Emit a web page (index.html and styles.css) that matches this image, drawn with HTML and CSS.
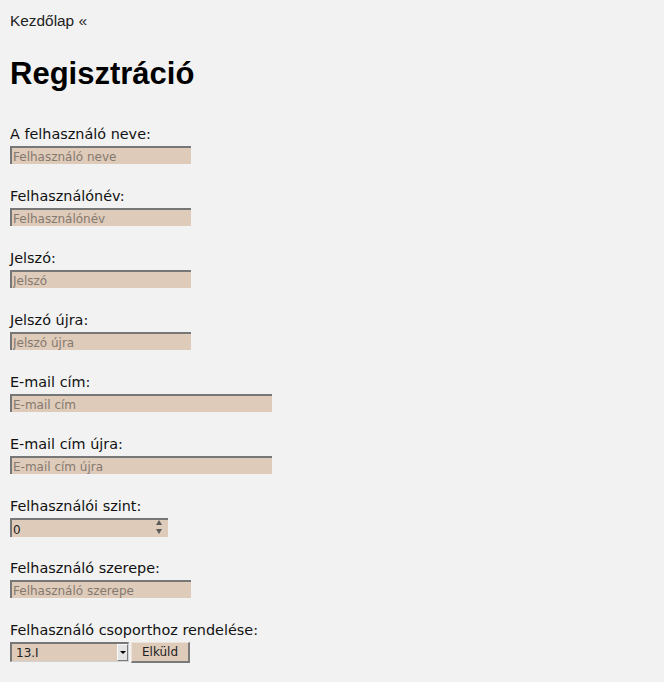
FILE: index.html
```html
<!DOCTYPE html>
<html lang="hu">
<head>
<meta charset="utf-8">
<title>Regisztráció</title>
<link rel="stylesheet" href="styles.css">
</head>
<body>
<div class="page">
  <nav class="crumb"><a class="crumb-link" href="#">Kezdőlap</a> «</nav>
  <h1 class="title">Regisztráció</h1>
  <form class="form">
    <div class="field">
      <label class="label" for="nev">A felhasználó neve:</label>
      <input class="input w-short" id="nev" type="text" placeholder="Felhasználó neve">
    </div>
    <div class="field">
      <label class="label" for="fnev">Felhasználónév:</label>
      <input class="input w-short" id="fnev" type="text" placeholder="Felhasználónév">
    </div>
    <div class="field">
      <label class="label" for="jelszo">Jelszó:</label>
      <input class="input w-short" id="jelszo" type="password" placeholder="Jelszó">
    </div>
    <div class="field">
      <label class="label" for="jelszo2">Jelszó újra:</label>
      <input class="input w-short" id="jelszo2" type="password" placeholder="Jelszó újra">
    </div>
    <div class="field">
      <label class="label" for="email">E-mail cím:</label>
      <input class="input w-long" id="email" type="text" placeholder="E-mail cím">
    </div>
    <div class="field">
      <label class="label" for="email2">E-mail cím újra:</label>
      <input class="input w-long" id="email2" type="text" placeholder="E-mail cím újra">
    </div>
    <div class="field">
      <label class="label" for="szint">Felhasználói szint:</label>
      <div class="number-wrap">
        <input class="input number" id="szint" type="number" value="0">
        <span class="spin" aria-hidden="true"><span class="tri-up"></span><span class="tri-down"></span></span>
      </div>
    </div>
    <div class="field">
      <label class="label" for="szerep">Felhasználó szerepe:</label>
      <input class="input w-short" id="szerep" type="text" placeholder="Felhasználó szerepe">
    </div>
    <div class="field">
      <label class="label" for="csoport">Felhasználó csoporthoz rendelése:</label>
      <div class="row">
        <div class="select-wrap">
          <select class="select" id="csoport">
            <option>13.I</option>
          </select>
          <span class="select-btn" aria-hidden="true"><span class="tri-down dark"></span></span>
        </div>
        <button class="button" type="button">Elküld</button>
      </div>
    </div>
  </form>
</div>
</body>
</html>
```

FILE: styles.css
```css
html, body {
  margin: 0;
  padding: 0;
  background: #f2f2f2;
}

.page {
  padding: 12px 10px 20px 10px;
  font-family: "DejaVu Sans", sans-serif;
  color: #111;
}

.crumb {
  font-family: "Liberation Sans", Arial, sans-serif;
  font-size: 15.4px;
  line-height: 17px;
  color: #222;
}

.crumb-link {
  color: #222;
  text-decoration: none;
}

.title {
  font-family: "Liberation Sans", Arial, sans-serif;
  font-weight: bold;
  font-size: 31px;
  line-height: 36px;
  margin: 27px 0 34px 0;
  color: #000;
}

.form {
  display: flex;
  flex-direction: column;
  gap: 24px;
}

.field {
  display: flex;
  flex-direction: column;
  align-items: flex-start;
  gap: 4px;
}

.label {
  font-size: 14.4px;
  line-height: 16px;
  color: #111;
}

.input {
  box-sizing: border-box;
  height: 18px;
  margin: 0;
  padding: 2px 1px 0 1px;
  font-family: "DejaVu Sans", sans-serif;
  font-size: 12px;
  line-height: 14px;
  color: #222;
  background: #dfcbba;
  border-style: solid;
  border-width: 2px 0 0 2px;
  border-color: #777 #dfcbba #dfcbba #777;
  outline: none;
}

.input::placeholder {
  color: #84796f;
  opacity: 1;
}

.w-short { width: 181px; }
.w-long { width: 262px; }

.number-wrap {
  position: relative;
  display: flex;
}

.number {
  width: 158px;
  height: 19px;
  margin-bottom: -1px;
  -moz-appearance: textfield;
}

.number::-webkit-outer-spin-button,
.number::-webkit-inner-spin-button {
  -webkit-appearance: none;
  margin: 0;
}

.spin {
  position: absolute;
  right: 6px;
  top: 2px;
  display: flex;
  flex-direction: column;
  gap: 4px;
}

.tri-up {
  width: 0;
  height: 0;
  border-left: 3px solid transparent;
  border-right: 3px solid transparent;
  border-bottom: 5px solid #5a5a5a;
}

.tri-down {
  width: 0;
  height: 0;
  border-left: 3px solid transparent;
  border-right: 3px solid transparent;
  border-top: 5px solid #5a5a5a;
}

.tri-down.dark {
  border-left-width: 3px;
  border-right-width: 3px;
  border-top: 3px solid #000;
}

.row {
  display: flex;
  align-items: flex-start;
  gap: 2px;
}

.select-wrap {
  position: relative;
  display: flex;
}

.select {
  -webkit-appearance: none;
  appearance: none;
  box-sizing: border-box;
  width: 119px;
  height: 20px;
  margin: 0;
  padding: 0 0 0 4px;
  font-family: "DejaVu Sans", sans-serif;
  font-size: 12px;
  line-height: 16px;
  color: #222;
  background: #dfcbba;
  border-style: solid;
  border-width: 2px 1px 1px 2px;
  border-color: #777 #d2d2d2 #d2d2d2 #777;
  border-radius: 0;
  outline: none;
}

.select-btn {
  position: absolute;
  right: 1px;
  top: 2px;
  box-sizing: border-box;
  width: 11px;
  height: 17px;
  background: #e4e4e4;
  border-style: solid;
  border-width: 1px;
  border-color: #fafafa #7a7a7a #7a7a7a #fafafa;
  display: flex;
  align-items: center;
  justify-content: center;
}

.button {
  box-sizing: border-box;
  width: 59px;
  height: 21px;
  margin: 0;
  padding: 0;
  font-family: "DejaVu Sans", sans-serif;
  font-size: 12px;
  line-height: 16px;
  color: #222;
  background: #dfcbba;
  border-style: solid;
  border-width: 1px 2px 2px 1px;
  border-color: #ece2d9 #7a7a7a #7a7a7a #ece2d9;
  border-radius: 0;
}
```
